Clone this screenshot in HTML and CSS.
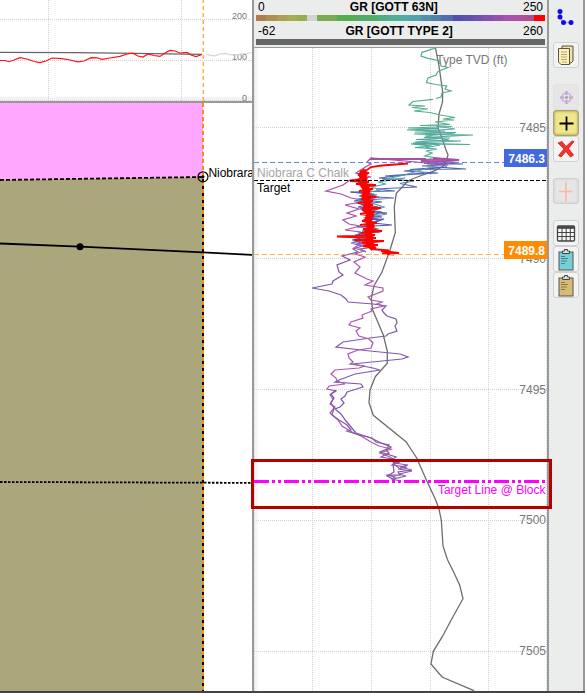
FILE: index.html
```html
<!DOCTYPE html>
<html lang="en">
<head>
  <meta charset="UTF-8">
  <meta name="viewport" content="width=device-width, initial-scale=1.0">
  <title>Geosteering</title>
  <link rel="stylesheet" href="styles.css">
</head>
<body>
  <div class="workspace">
    <div class="section-panel">
      <svg class="gamma-chart" viewBox="0 0 252 101">
        <rect x="0" y="97" width="252" height="4" fill="#f3f3f3" />
        <path class="grid" d="M48.5 0V101M181.5 0V101M0 19.5H252M0 60.5H252M0 100.5H252" />
        <g class="scale">
          <text x="247" y="19">200</text>
          <text x="247" y="60">100</text>
          <text x="247" y="100.5">0</text>
        </g>
        <polyline class="type-line" points="0,52.4 75,52.7 135,53.3 202,54.4" />
        <polyline class="gr-line" points="0,60.5 5,60.5 9,61.7 14,60 20,57.7 27,59 34,61.5 40,62.6 46,61 52,58 62,58.7 70,60 78,61.9 84,61 91,57.6 97,57.8 102,59.4 110,58 120,56.3 127,54 133,53.2 138,56 143,57 148,54 154,55.5 160,56.4 165,53 170,50.4 175,51 180,53 187,52.3 191,55 196,56.5 202,54.5" />
        <polyline class="ahead-line" points="206,54 210,55.3 215,55.8 220,54 225,53.3 230,54.6 236,55 242,53.8 247,53.5 252,52.5" />
        <path class="bit-line light" d="M203.3 -1V101" />
      </svg>
      <svg class="cross-section" viewBox="0 103 252 588">
        <path d="M0 103H203V177L0 180Z" fill="#ffa6ff" />
        <path d="M0 180L203 177V691H0Z" fill="#aca67c" />
        <path class="bit-line upper" d="M203 103V177" />
        <path class="bit-line" d="M203 177V691" />
        <path class="fault" d="M203 179V691" />
        <path class="horizon" d="M0 180L203 177" />
        <path class="target-top" d="M0 482L91 482.3L203 482.7L252 482.9" />
        <path class="well-path" d="M0 243.5L80 246.7L203 252.4L252 254.9" />
        <circle cx="80" cy="246.7" r="3.5" />
        <circle class="node" cx="203" cy="176.8" r="5" />
        <circle cx="203" cy="176.8" r="1.5" />
        <text x="208.5" y="177" textLength="91">Niobrara C Chalk</text>
      </svg>
    </div>

    <div class="log-panel">
      <div class="log-header">
        <div class="log-row"><span>0</span><b>GR [GOTT 63N]</b><span>250</span></div>
        <div class="color-bar"></div>
        <div class="log-row second"><span>-62</span><b>GR [GOTT TYPE 2]</b><span>260</span></div>
        <div class="grey-bar"></div>
      </div>
      <svg class="log-chart" viewBox="254 48 293 643">
        <rect x="254" y="48" width="4" height="643" fill="#f6f6f6" />
        <path class="grid" d="M254.5 48V691M312.5 48V691M371.5 48V691M430.5 48V691M488.5 48V691M546.5 48V691" />
        <path class="grid" d="M254 127.5H547M254 258.5H547M254 389.5H547M254 520.5H547M254 651.5H547" />

        <g class="depths">
          <text x="507.500" y="64">Type TVD (ft)</text>
          <text x="546" y="132">7485</text>
          <text x="546" y="263">7490</text>
          <text x="546" y="394">7495</text>
          <text x="546" y="524">7500</text>
          <text x="546" y="655">7505</text>
        </g>
        <text x="257" y="177" fill="#a6a6a6">Niobrara C Chalk</text>

        <!-- type log -->
        <polyline class="type-log" points="435.5,48 439,66 442.7,92 442.5,102 439,114 438,128 442,138 446,150 448,155 445,165 435,170.7 420,176 408,180.7 396.3,193.3 394.3,206.7 395.3,232.7 390,250 382,272 374,285.7 371.3,298.3 372.7,310 383.3,335 387.3,351 387.3,363.3 375.3,376.7 370,390 369,402.7 373.3,415.3 406,441.7 416.7,458 426.7,480.7 435.7,500 439,509 441.3,520 443,546 447.3,559.3 454,572.7 459.7,585.3 463,598.7 452.3,618 442.3,636.7 433.3,651.3 431,664 442,677 474,690.7" />

        <!-- gamma ray, coloured by value -->
        <g class="gr-log">
          <polyline stroke="#58ad88" points="435.7,48 422,52.3 421,56 428,58.3 440,61 441,66 448,67.5 438,71.5 436,75 428,78 426.5,82.5 436,84.5 446.7,86 445,89 451,91 442,93 441,97 436,98.5" />
          <polyline stroke="#58ad88" points="433,99.3 413,101.5 409,105 425,106 412,107.5 428,109 414,111 430,112.5 440,115 455,117.5 443,119 454,120 435,122 450,124.5 420,125.5" />
          <polyline stroke="#51aa94" points="420,125.5 452,126.5 408,128 438,128.7 407,130 445,131 415,132 456,132.5 414,134 440,134.6 473,135 424,137.5 450,138 416,139.5 442,140.6 461,141 413,143 470,144.5 411,144 432,146 415,147.5 437,149 426,151 432,153 425,156 437,158 425,160" />
          <polyline stroke="#58a8ad" points="436,126 455,129 423,131 455,133 425,136 449,140 415,142 440,145 425,148" />
          <path stroke="#a850a6" stroke-width="2.2" d="M370 159H426L421 161L450 162L424 163L459 160L433 158" />
          <polyline stroke="#a850a6" points="420,159 452,160 422,161 456,162.5 427,164 448,165 371,158 367,162 371,164 367,166 356,173 371,177 350,180 343,185 326,191 341,194 351,198 366,201 345,205 359,209 347,213 356,216 343,220 349,224 360,226 345,230 361,232" />
          <polyline stroke="#5266ad" points="440,163 463,164 422,166 466,169 410,169.5 447,167 404,171 438,173 385,176 424,173 379,178 414,181 400,183.5 417,187 376,189 395,191 351,192 377,195 360,196 394,198 366,200 382,202 361,204 378,207" />
          <polyline stroke="#55a1ad" points="435,166 404,175 382,180 405,178 378,182 386,184 371,187 381,190 363,193 375,195 358,199 384,207 372,211 387,214 371,217 378,221" />
          <polyline stroke="#5a54ad" points="350,192 374,194 359,196 379,197 354,201 370,204 358,207 378,209 363,211 387,213 368,215 382,217 363,220 384,219 373,223 392,225 357,227 376,229 362,231 380,232 355,235 366,237 352,240 371,242 356,244 374,247 360,249 366,252" />
          <polyline stroke="#5066ad" points="370,198 357,203 371,206 360,209 382,212 369,216 380,220 365,225 377,229 359,233 372,237 355,241 368,245" />
          <polyline stroke="#8058b0" points="366,240 351,243 362,246 353,249 358,252 342,256 350,260 337,265 339,272 343,275 333,281 332,284 312,288 329,291 341,295 346,299 348,302 373,304 386,306 382,310 384,313 387,316 396,319 397,323 395,326 397,331 388,334 386,336 370,338 343,342 336,347 370,351 400,354 408,357 402,359 352,364 373,368 380,370 355,374 339,380 335,382 361,384 363,387 347,392 345,396 341,399 344,403 340,407 335,409 341,414 346,421 351,427 356,433 371,438 381,443 391,447 386,450 389,453 381,457 393,459 396,462 392,465 407,467 398,469 412,471 399,474 406,476 393,479 387,476 394,472 393,464 400,462" />
          <polyline stroke="#a95bae" points="363,242 354,248 364,251 355,254 365,257 354,262 360,267 355,273 367,279 373,281 365,285 383,288 383,291 368,297 371,300 382,302 377,304 384,306 371,309 372,311 362,315 363,318 351,322 349,325 360,328 356,331 359,336 369,339 373,343 371,348 358,350 348,354 349,358 353,362 350,364 365,366 359,368 335,370 331,374 336,378 337,381 345,384 329,386 327,389 336,391 330,395 333,399 330,404 335,407 330,413 338,420 342,426 350,431 361,436 371,442 379,446 391,449 380,453 390,457 395,460 394,464 399,468" />
          <polyline stroke="#8958ae" points="336,390 331,394 334,398 331,403 334,408 332,415 339,420 347,425 351,430 347,431 359,435 372,438 376,442 389,445 387,449 380,452 396,457 391,460 394,463 408,465 400,467 412,470 398,472 400,475 386,475 395,477 392,479 400,481" />
        </g>
        <polyline class="gr-red core" points="366,171 362,175 364,179 363,184 367,190 365,196 368,202 366,209 370,214 368,220 371,226 368,232 370,238 369,244 374,248" />
        <polyline class="gr-red" points="408,163.5 382,165.5 371,167 367,170 360,171.5 369,173 358,175 365,177 357,180 350,181 369,182 356,184 376,185 362,187 373,189 359,191 370,193 362,195 376,197 361,199 373,201 358,203 373,205 365,207 381,208 362,210 375,212 360,214 374,216 366,218 371,220 362,221 377,223 360,225 372,227 363,229 382,231 361,233 375,235 355,236 337,236.5 376,238 355,240 384,241 362,243 378,245 363,246 376,248 371,249 389,250.5 381,251 399,253 382,253.5 394,254.5" />

        <path class="marker blue" d="M254 162.5H505" />
        <path class="marker black" d="M254 180.5H547" />
        <path class="marker orange" d="M254 254.5H505" />
        <text x="257" y="192">Target</text>

        <rect x="504" y="149" width="43" height="18" fill="#4169e1" />
        <text class="tag" x="545" y="163">7486.3</text>
        <rect x="504" y="241" width="43" height="18" fill="#ff8c00" />
        <text class="tag" x="545" y="255">7489.8</text>

        <path class="target-line" d="M254 481.5H546" />
        <text class="target-text" x="545.500" y="494">Target Line @ Block</text>
      </svg>
      <div class="highlight"></div>
    </div>

    <div class="toolbar">
      <button class="tool plain">
        <svg viewBox="0 0 24 24"><path d="M6 5.500V11L9 16.500H17" fill="none" stroke="#dfb34a" stroke-width="1.5" /><g fill="#0a0aff"><circle cx="6" cy="5.500" r="2.500" /><circle cx="6" cy="11" r="2.500" /><circle cx="9.5" cy="16.500" r="2.500" /><circle cx="17" cy="16.500" r="2.500" /></g></svg>
      </button>
      <button class="tool copy">
        <svg viewBox="0 0 24 24"><path d="M8 3H19V18L17 20H8Z" fill="#eee2a4" stroke="#555" /><path d="M4.500 5.500H15.500V21.500H7L4.500 19Z" fill="#fff0b5" stroke="#555" /><path d="M7 9H13M7 11.500H13M7 14H13M7 16.500H13M8 19H13" stroke="#b5a878" /></svg>
      </button>
      <button class="tool disabled locate">
        <svg viewBox="0 0 24 24"><path d="M12.500 6V10M12.500 15V19M6 12.500H10M15 12.500H19M11 12.500H14M12.500 11V14" stroke="#aaa" stroke-width="2" /><circle cx="12.500" cy="12.500" r="4.500" fill="none" stroke="#d7a5ee" stroke-width="1.600" /></svg>
      </button>
      <button class="tool active">
        <svg viewBox="0 0 24 24"><path d="M12.500 5.500V19.500M5.500 12.500H19.500" stroke="#000" stroke-width="1.800" /></svg>
      </button>
      <button class="tool">
        <svg viewBox="0 0 24 24"><path d="M4 6L8 4.500L12 9.500L18 4L20 4.500L14.500 11.500L19.500 18L16.500 20L12 14.500L7 20L4.500 18.500L10 12Z" fill="#fb3026" stroke="#c91a16" stroke-width=".8" /></svg>
      </button>
      <button class="tool disabled pressed cross">
        <svg viewBox="0 0 24 24"><path d="M12 2.500V22.500M5 12.500H18.500" stroke="#f5bda9" stroke-width="1.700" /></svg>
      </button>
      <button class="tool table">
        <svg viewBox="0 0 24 24"><rect x="3.500" y="5" width="17" height="15" rx="1" fill="#f7f7f7" stroke="#444" stroke-width="1.300" /><path d="M3.500 6.500H20.500" stroke="#444" stroke-width="2.600" /><path d="M4 11.500H20M4 15.500H20M8 6V20M12.200 6V20M16.300 6V20" stroke="#444" /></svg>
      </button>
      <button class="tool">
        <svg viewBox="0 0 24 24"><rect x="5" y="5" width="14" height="18" fill="#77cfd6" stroke="#555" /><path d="M8.500 6.500V4H10.500V2.500H13.500V4H15.500V6.500Z" fill="#ddd" stroke="#444" /><path d="M7 9.500H11M7 11.500H14M7 14H13M7 16.500H11" stroke="#45858c" /></svg>
      </button>
      <button class="tool">
        <svg viewBox="0 0 24 24"><rect x="5" y="5" width="14" height="18" fill="#d5bc76" stroke="#555" /><path d="M8.500 6.500V4H10.500V2.500H13.500V4H15.500V6.500Z" fill="#ddd" stroke="#444" /><path d="M7 9.500H11M7 11.500H14M7 14H13M7 16.500H11" stroke="#8d7840" /></svg>
      </button>
    </div>
  </div>
</body>
</html>
```
FILE: styles.css
```css
* {
  box-sizing: border-box;
}
body {
  margin: 0;
  font-family: "Liberation Sans", Arial, sans-serif;
  font-size: 12px;
  color: #000;
  background: #fff;
}
svg {
  display: block;
}
.workspace {
  display: flex;
  width: 585px;
  height: 693px;
  border-bottom: 2px solid #444;
  overflow: hidden;
}
.section-panel {
  width: 252px;
}
.gamma-chart {
  width: 252px;
  height: 101px;
}
.cross-section {
  width: 252px;
  height: 590px;
  border-top: 2px solid #999;
}
.grid {
  fill: none;
  stroke: #d2d2d2;
  stroke-dasharray: 1 1;
  shape-rendering: crispEdges;
}
.scale {
  font-size: 9px;
  fill: #777;
  text-anchor: end;
}
.type-line,
.gr-line,
.ahead-line {
  fill: none;
  stroke: #666;
  stroke-width: 1.2;
}
.gr-line {
  stroke: #ff1010;
}
.ahead-line {
  stroke: #d4d4d4;
}
.bit-line {
  stroke: #ff8c00;
  stroke-width: 2;
}
.bit-line.upper {
  stroke-dasharray: 4 3;
}
.bit-line.light {
  stroke: #ffad4d;
  stroke-width: 1.5;
  stroke-dasharray: 4 3;
}
.fault {
  stroke: #000;
  stroke-width: 2;
  stroke-dasharray: 3 4;
}
.horizon {
  stroke: #000;
  stroke-width: 1.8;
  stroke-dasharray: 4 2;
}
.target-top {
  fill: none;
  stroke: #000;
  stroke-width: 1.8;
  stroke-dasharray: 2.5 1.5;
}
.well-path {
  fill: none;
  stroke: #000;
  stroke-width: 1.8;
}
.node {
  fill: none;
  stroke: #000;
  stroke-width: 1.2;
}

/* log track */
.log-panel {
  position: relative;
  width: 297px;
  border-left: 2px solid #999;
  border-right: 2px solid #999;
}
.log-header {
  height: 48px;
  padding: 0 2px;
  background: #ebedec;
  border-bottom: 1px solid #999;
}
.log-row {
  display: flex;
  justify-content: space-between;
  height: 15px;
  padding: 0 2px;
  line-height: 14px;
}
.log-row.second {
  height: 18px;
  line-height: 20px;
}
.color-bar {
  height: 6px;
  background: linear-gradient(90deg,
    #ad7d50 0 3.6%, #ad8f50 0 7.1%, #ada050 0 10.6%, #a5ad50 0 14.2%, #98ad50 0 17.7%,
    #d3d3d3 0 21.2%, #77ad50 0 28%, #56ad50 0 35%, #50ad66 0 42%, #50ad84 0 46%,
    #50ad98 0 50%, #50ada6 0 53.4%, #50a3ad 0 57%, #5090ad 0 60.5%, #507ead 0 64%,
    #506dad 0 68%, #5250ad 0 71.5%, #6050ad 0 75%, #7250ad 0 78.5%, #8450ad 0 82%,
    #9650ad 0 85.5%, #a750ad 0 89%, #ad50a4 0 93%, #ad508e 0 96.2%, #f00 0);
}
.grey-bar {
  height: 6px;
  background: #666;
}
.log-chart {
  width: 293px;
  height: 643px;
}
.depths {
  fill: #777;
  text-anchor: end;
}
.type-log {
  fill: none;
  stroke: #6e6e6e;
  stroke-width: 1.3;
}
.gr-log {
  fill: none;
  stroke-width: 1.25;
}
.gr-red {
  fill: none;
  stroke: #f00;
  stroke-width: 1.8;
}
.gr-red.core {
  stroke-width: 7;
}
.marker {
  stroke-dasharray: 5 3;
}
.blue {
  stroke: #6485e8;
}
.black {
  stroke: #000;
  stroke-dasharray: 4 2;
}
.orange {
  stroke: #ffae4d;
}
.tag {
  fill: #fff;
  font-weight: bold;
  text-anchor: end;
}
.target-line {
  stroke: #f0f;
  stroke-width: 3;
  stroke-dasharray: 15 3 3 3 3 3;
}
.target-text {
  fill: #f0f;
  text-anchor: end;
}
/* box over the target line, overlaps both track borders */
.highlight {
  position: absolute;
  left: -3px;
  top: 459px;
  width: 301px;
  height: 50px;
  border: 3px solid #b50000;
}

.toolbar {
  display: flex;
  flex-direction: column;
  align-items: center;
  width: 36px;
  padding-top: 5px;
  background: #ebedec;
  border-right: 2px solid #999;
}
.tool {
  flex: none;
  width: 26px;
  height: 26px;
  padding: 0;
  border: 1px solid #d0d0d0;
  border-radius: 3px;
  background: #f3f3f3;
}
.tool svg {
  width: 24px;
  height: 24px;
}
.plain {
  border-color: transparent;
  background: none;
}
.copy {
  margin: 11px 0 16px;
}
.disabled {
  background: #e6e6e6;
  border-color: #e2e2e2;
}
.active {
  background: #f0e68c;
  border: 1px solid #aaa16b;
  box-shadow: inset 0 0 3px #8c8452;
}
.pressed {
  border-color: #d0d0d0;
  box-shadow: inset 0 0 3px #ccc;
}
.cross {
  margin: 16px 0;
}
```
